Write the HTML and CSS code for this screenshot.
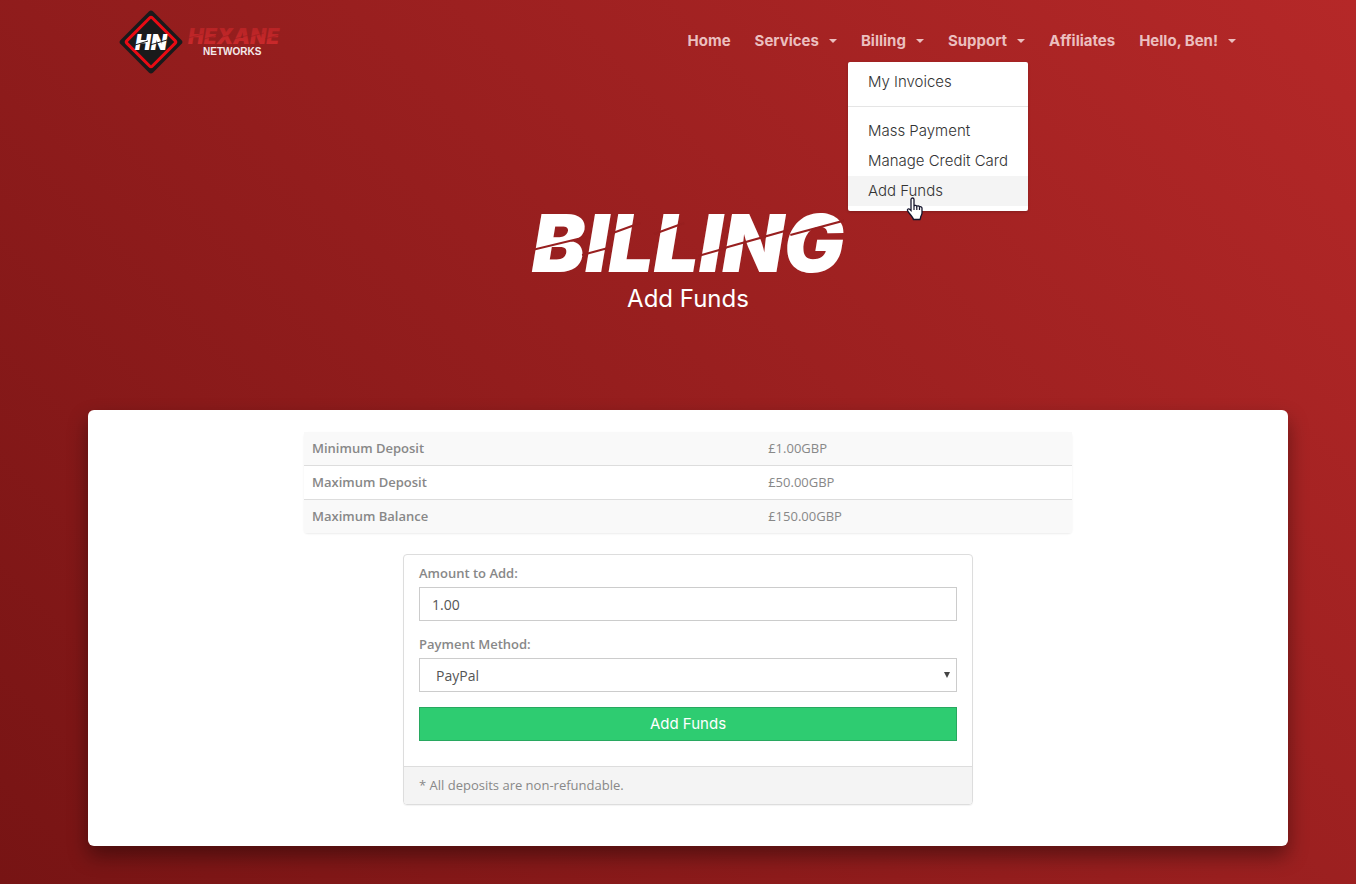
FILE: index.html
```html
<!DOCTYPE html>
<html lang="en">
<head>
<meta charset="utf-8">
<meta name="viewport" content="width=device-width, initial-scale=1">
<title>Billing - Add Funds</title>
<link rel="stylesheet" href="styles.css">
</head>
<body class="page">
<header class="header">
  <a class="logo" href="#" aria-label="Hexane Networks">
    <svg class="logo-art" viewBox="0 0 172 66" width="172" height="66">
      <defs>
        <linearGradient id="word" x1="0" y1="0" x2="0" y2="1">
          <stop offset="0" stop-color="#b32224"/>
          <stop offset="1" stop-color="#cf2b2d"/>
        </linearGradient>
      </defs>
      <rect x="10" y="10" width="46" height="46" rx="3" fill="#1a1a1b" transform="rotate(45 33 33)"/>
      <rect x="15" y="15" width="36" height="36" rx="2" fill="#1a1a1b" stroke="#e90b14" stroke-width="3" transform="rotate(45 33 33)"/>
      <text class="logo-mark" x="33" y="41" text-anchor="middle">HN</text>
      <path d="M17 36l13-4M32 36l17-5" stroke="#1a1a1b" stroke-width="1"/>
      <text class="logo-word" x="70" y="35" fill="url(#word)">HEXANE</text>
      <path d="M70 29l15-4M86 30l14-4M101 29l14-4M116 30l15-4M131 28l15-4M147 30l14-4" stroke="#931d1e" stroke-width=".5"/>
      <text class="logo-sub" x="85" y="46">NETWORKS</text>
    </svg>
  </a>
  <nav class="nav">
    <a class="nav-link" href="#">Home</a>
    <a class="nav-link nav-drop" href="#">Services</a>
    <div class="nav-item">
      <a class="nav-link nav-drop" href="#">Billing</a>
      <div class="menu">
        <a class="menu-link" href="#">My Invoices</a>
        <hr class="menu-rule">
        <a class="menu-link" href="#">Mass Payment</a>
        <a class="menu-link" href="#">Manage Credit Card</a>
        <a class="menu-link menu-link-active" href="#">Add Funds</a>
        <svg class="pointer" viewBox="0 0 18 24" width="18" height="24" aria-hidden="true">
          <path d="M5 2.500c0-2 3-2 3 0V9c.5-1 2.600-.8 2.800.4.7-1 2.500-.7 2.700.6.8-.7 2.500-.3 2.500 1.200V16c0 2-1.500 3-1.500 5l-.5 1.500H7.500C7 20 2.500 16 1.500 13.500c-.5-1.500 1.200-2.200 2.200-1.200L5 13.500z" fill="#fff" stroke="#14142b" stroke-width="1.300"/>
          <path d="M8 9v4M10.800 10v3M13.500 10.500V13" stroke="#14142b" stroke-width="1.200"/>
        </svg>
      </div>
    </div>
    <a class="nav-link nav-drop" href="#">Support</a>
    <a class="nav-link" href="#">Affiliates</a>
    <a class="nav-link nav-drop" href="#">Hello, Ben!</a>
  </nav>
</header>
<section class="banner">
  <h1 class="banner-title">BILLING
    <svg class="slashes" viewBox="0 0 312 64" preserveAspectRatio="none" aria-hidden="true">
      <path d="M0 39L54 26M50 44L76 37M78 23L108 12M122 23L152 12M166 45L194 37M192 37L256 19M258 24L314 9"/>
    </svg>
  </h1>
  <p class="banner-sub">Add Funds</p>
</section>
<main class="card">
  <table class="limits">
    <tbody>
      <tr><th scope="row">Minimum Deposit</th><td>£1.00GBP</td></tr>
      <tr><th scope="row">Maximum Deposit</th><td>£50.00GBP</td></tr>
      <tr><th scope="row">Maximum Balance</th><td>£150.00GBP</td></tr>
    </tbody>
  </table>
  <form class="panel">
    <div class="panel-body">
      <label class="label" for="amount">Amount to Add:</label>
      <input class="control" id="amount" type="text" value="1.00">
      <label class="label" for="method">Payment Method:</label>
      <div class="select-wrap">
        <select class="control select" id="method"><option>PayPal</option></select>
      </div>
      <button class="submit" type="button">Add Funds</button>
    </div>
    <div class="panel-footer">* All deposits are non-refundable.</div>
  </form>
</main>
</body>
</html>
```
FILE: styles.css
```css
* { box-sizing: border-box; }

.page {
  margin: 0;
  padding: 0 0 38px 20px;
  min-height: 100vh;
  background: linear-gradient(45deg, #771414, #b52828);
  color: #888;
  font: 13px/18px "Open Sans", sans-serif;
}

.header {
  display: flex;
  justify-content: space-between;
  align-items: center;
  max-width: 1140px;
  height: 84px;
  margin: 0 auto;
}

.logo-art { display: block; }
.logo-mark { font: italic 900 21px Inter, sans-serif; fill: #fff; }
.logo-word { font: italic 900 21px Inter, sans-serif; }
.logo-sub { font: bold 10px "Liberation Sans", sans-serif; fill: #f4eaea; }

.nav {
  display: flex;
  gap: 24px;
  padding: 0 22px 2px 0;
}
.nav-item { position: relative; }
.nav-link {
  display: flex;
  align-items: center;
  gap: 10px;
  color: #ebbfbf;
  font: bold 15px/20px Inter, sans-serif;
  text-decoration: none;
}
.nav-drop::after {
  content: "";
  border: 4px solid transparent;
  border-top-color: currentColor;
  border-bottom: 0;
}

.menu {
  position: absolute;
  top: 31px;
  left: -13px;
  z-index: 2;
  width: 180px;
  padding: 5px 0;
  border-radius: 2px;
  background: #fff;
  box-shadow: 0 1px 3px rgba(0, 0, 0, 0.2);
}
.menu-link {
  display: block;
  padding: 0 20px;
  color: #333;
  font: 300 15px/30px Inter, sans-serif;
  text-decoration: none;
  white-space: nowrap;
}
.menu-link-active { background: #f4f4f4; }
.menu-rule {
  height: 1px;
  margin: 9px 0;
  border: 0;
  background: #e5e5e5;
}
.pointer {
  position: absolute;
  left: 58px;
  bottom: -10px;
}

.banner {
  padding: 118px 0 96px;
  color: #fff;
  text-align: center;
}
.banner-title {
  position: relative;
  width: fit-content;
  margin: 0 auto;
  font: italic 900 80px/82px Inter, sans-serif;
}
.slashes {
  position: absolute;
  left: 0;
  top: 9px;
  width: 100%;
  height: 64px;
  fill: none;
  stroke: #981f1f;
  stroke-width: 2;
}
.banner-sub {
  margin: 0;
  font: 24px/30px Inter, sans-serif;
}

.card {
  max-width: 1200px;
  margin: 0 auto;
  padding: 22px 216px 41px;
  border-radius: 6px;
  background: #fff;
  box-shadow: 0 10px 20px rgba(0, 0, 0, 0.4);
}

.limits {
  width: 100%;
  border-collapse: collapse;
  border-radius: 4px;
  box-shadow: 0 1px 2px rgba(0, 0, 0, 0.08);
}
.limits th,
.limits td {
  height: 34px;
  padding: 0 8px;
  text-align: left;
}
.limits tr:first-child > * { height: 33px; }
.limits th { width: 59.4%; font-weight: 600; }
.limits tr + tr { border-top: 1px solid #ddd; }
.limits tr:nth-child(odd) { background: #f9f9f9; }

.panel {
  max-width: 570px;
  margin: 21px auto 0;
  border: 1px solid #ddd;
  border-radius: 4px;
  box-shadow: 0 1px 1px rgba(0, 0, 0, 0.05);
  overflow: hidden;
}
.panel-body { padding: 9px 15px 25px; }
.label {
  display: block;
  margin-bottom: 5px;
  font-weight: 600;
}
.control {
  display: block;
  width: 100%;
  height: 34px;
  margin-bottom: 14px;
  padding: 0 12px;
  border: 1px solid #ccc;
  border-radius: 0;
  background: #fff;
  color: #555;
  font: 14px/20px "Open Sans", sans-serif;
}
.select-wrap {
  position: relative;
  margin-bottom: 15px;
}
.select {
  margin: 0;
  padding: 2px 16px 0;
  appearance: none;
}
.select-wrap::after {
  content: "";
  position: absolute;
  top: 14px;
  right: 7px;
  border: 3px solid transparent;
  border-top: 6px solid #444;
  border-bottom: 0;
}
.submit {
  display: block;
  width: 100%;
  height: 34px;
  border: 1px solid #28a860;
  background: #2ecc71;
  color: #fff;
  font: 15px/20px Inter, sans-serif;
}
.panel-footer {
  padding: 9px 15px 10px;
  border-top: 1px solid #ddd;
  background: #f4f4f4;
}
```
